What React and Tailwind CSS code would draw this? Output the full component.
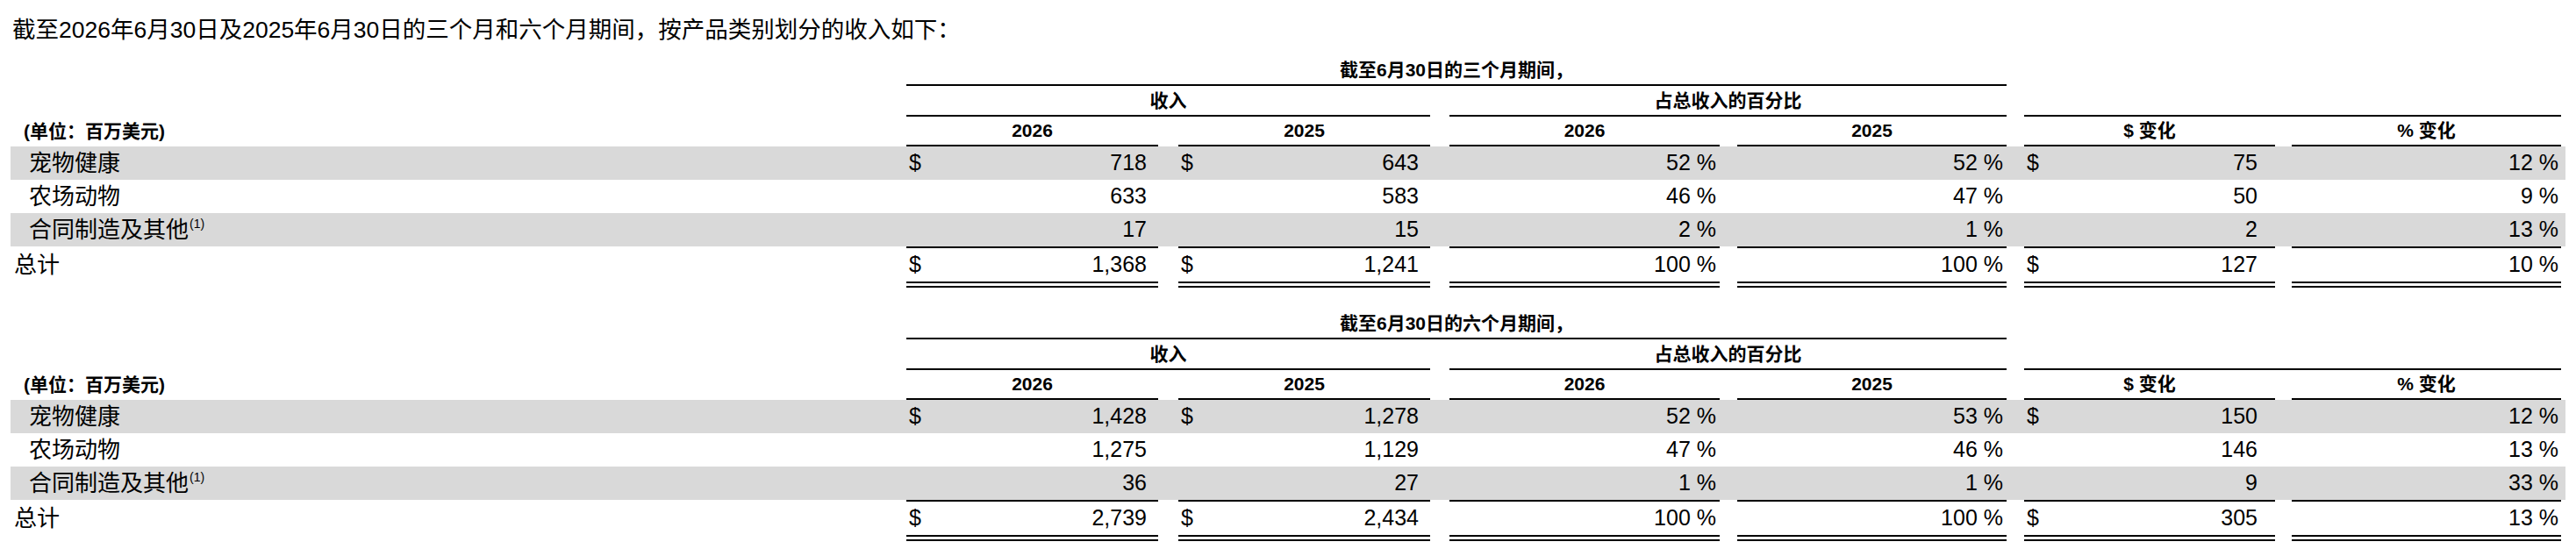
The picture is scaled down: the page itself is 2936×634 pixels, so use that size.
import React, { Fragment } from 'react';

// column widths and the white gaps between them
const W = ['w-[287px]', 'w-[287px]', 'w-[308px]', 'w-[307px]', 'w-[286px]', 'w-[307px]'];
const G = ['w-[23px]', 'w-[22px]', 'w-[20px]', 'w-[20px]', 'w-[19px]'];
const PAD = [
  'pl-[3px] pr-[13px]',
  'pl-[3px] pr-[13px]',
  'pl-[3px] pr-[4px]',
  'pl-[3px] pr-[4px]',
  'pl-[3px] pr-[20px]',
  'pl-[3px] pr-[3px]',
];
const HAS_DOLLAR = [true, true, false, false, true, false];

const tables = [
  {
    title: '截至6月30日的三个月期间，',
    rows: [
      { label: '宠物健康', values: ['718', '643', '52 %', '52 %', '75', '12 %'], dollar: true },
      { label: '农场动物', values: ['633', '583', '46 %', '47 %', '50', '9 %'] },
      { label: '合同制造及其他', note: '(1)', values: ['17', '15', '2 %', '1 %', '2', '13 %'] },
    ],
    total: ['1,368', '1,241', '100 %', '100 %', '127', '10 %'],
  },
  {
    title: '截至6月30日的六个月期间，',
    rows: [
      { label: '宠物健康', values: ['1,428', '1,278', '52 %', '53 %', '150', '12 %'], dollar: true },
      { label: '农场动物', values: ['1,275', '1,129', '47 %', '46 %', '146', '13 %'] },
      { label: '合同制造及其他', note: '(1)', values: ['36', '27', '1 %', '1 %', '9', '33 %'] },
    ],
    total: ['2,739', '2,434', '100 %', '100 %', '305', '13 %'],
  },
];

function Cells({ values, dollar, cellClass = '' }) {
  return values.map((v, i) => (
    <Fragment key={i}>
      <div className={`${W[i]} ${PAD[i]} ${cellClass} flex items-center justify-between`}>
        <span>{dollar && HAS_DOLLAR[i] ? '$' : ''}</span>
        <span>{v}</span>
      </div>
      {i < 5 && <div className={G[i]} />}
    </Fragment>
  ));
}

function RevenueTable({ title, rows, total }) {
  return (
    <div className="text-[25px]">
      {/* period header */}
      <div className="flex h-[35px] text-[21px] font-bold">
        <div className="w-[1021px]" />
        <div className="w-[1254px] border-b-2 border-black flex items-center justify-center">{title}</div>
      </div>
      <div className="flex h-[35px] text-[21px] font-bold">
        <div className="w-[1021px]" />
        <div className="w-[597px] border-b-2 border-black flex items-center justify-center">收入</div>
        <div className="w-[22px]" />
        <div className="w-[635px] border-b-2 border-black flex items-center justify-center">占总收入的百分比</div>
        <div className="w-[20px]" />
        <div className="w-[612px] border-b-2 border-black" />
      </div>
      <div className="flex h-[34px] text-[21px] font-bold">
        <div className="w-[1021px] pl-[15px] flex items-center">(单位：百万美元)</div>
        {['2026', '2025', '2026', '2025', '$ 变化', '% 变化'].map((h, i) => (
          <Fragment key={i}>
            <div className={`${W[i]} border-b-2 border-black flex items-center justify-center`}>{h}</div>
            {i < 5 && <div className={G[i]} />}
          </Fragment>
        ))}
      </div>

      {rows.map((r, idx) => (
        <div key={r.label} className={`flex h-[38px] ${idx % 2 === 0 ? 'bg-[#d9d9d9]' : ''}`}>
          <div className="w-[1021px] pl-[21px] flex items-center text-[26px]">
            {r.label}
            {r.note && <sup className="text-[14px] ml-[1px]">{r.note}</sup>}
          </div>
          <Cells values={r.values} dollar={r.dollar} />
        </div>
      ))}

      <div className="flex h-[47px]">
        <div className="w-[1021px] pl-[4px] pt-[2px] pb-[7px] flex items-center text-[26px]">总计</div>
        <Cells values={total} dollar cellClass="border-t-2 border-b-[7px] border-double border-black" />
      </div>
    </div>
  );
}

export default function App() {
  return (
    <div className="w-[2936px] h-[634px] bg-white text-black px-[12px] pt-[17px] font-['Liberation_Sans','Noto_Sans_CJK_SC',sans-serif]">
      <div className="h-[34px] leading-[34px] text-[26.5px] pl-[2px] mb-[12px]">
        截至2026年6月30日及2025年6月30日的三个月和六个月期间，按产品类别划分的收入如下：
      </div>
      <div className="flex flex-col gap-[24px]">
        {tables.map((t) => (
          <RevenueTable key={t.title} {...t} />
        ))}
      </div>
    </div>
  );
}
